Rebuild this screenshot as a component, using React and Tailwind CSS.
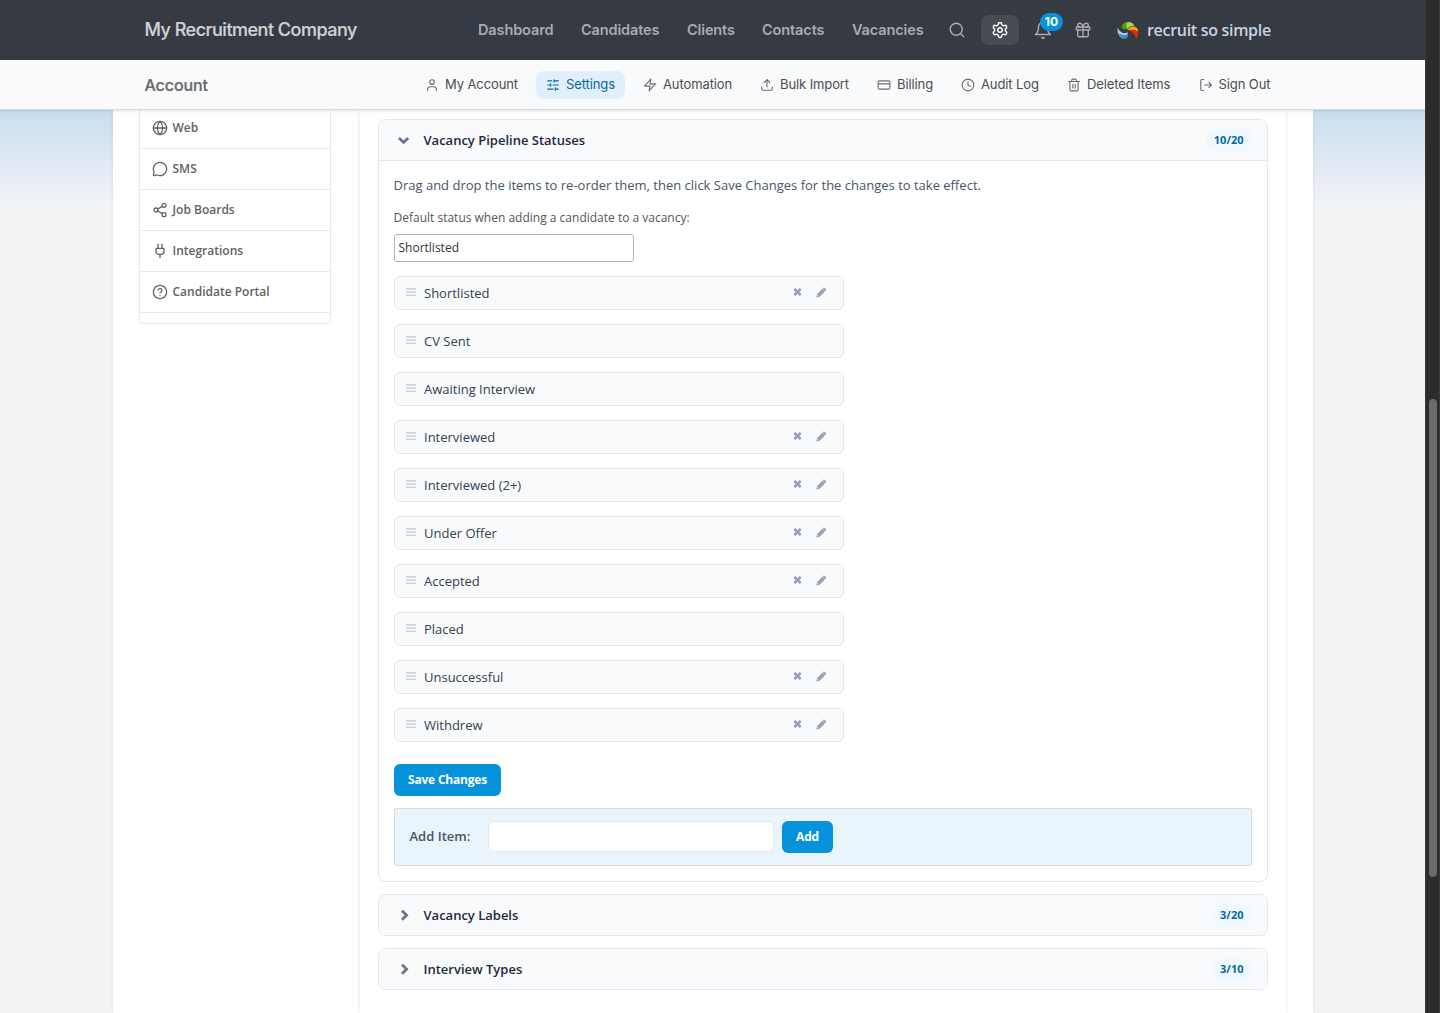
import React from "react";
import {
  Search, Settings, Gift, SlidersHorizontal, Upload, CreditCard, Clock,
  Globe, MessageCircle, Share2, Plug, CircleHelp,
} from "lucide-react";

function makeIcon(children) {
  return function Icon({ size = 24, strokeWidth = 2, className = "" }) {
    return (
      <svg
        width={size}
        height={size}
        viewBox="0 0 24 24"
        fill="none"
        stroke="currentColor"
        strokeWidth={strokeWidth}
        strokeLinecap="round"
        strokeLinejoin="round"
        className={className}
      >
        {children}
      </svg>
    );
  };
}

const Person = makeIcon(
  <>
    <circle cx="12" cy="7" r="4" />
    <path d="M4.500 21.500v-1.500a5 5 0 0 1 5-5h5a5 5 0 0 1 5 5v1.500" />
  </>
);
const Bolt = makeIcon(<path d="M13.500 2 2.500 14H12l-1.500 8L21.500 10H12Z" />);
const Bin = makeIcon(
  <path d="M2.500 6h19M19 6v14a2 2 0 0 1-2 2H7a2 2 0 0 1-2-2V6M8 6V4a2 2 0 0 1 2-2h4a2 2 0 0 1 2 2v2M10 11v6M14 11v6" />
);
const Exit = makeIcon(
  <path d="M8 2.500H5a2 2 0 0 0-2 2v15a2 2 0 0 0 2 2h3M17 7.500l4.500 4.500-4.500 4.500M21 12H10" />
);
const BellIcon = makeIcon(
  <>
    <path d="M18 8A6 6 0 0 0 6 8c0 7-4 10-4 10h20s-4-3-4-10" />
    <path d="M13.700 22a2 2 0 0 1-3.400 0" />
  </>
);

const mainNav = [
  ["Dashboard", "w-[75px]"],
  ["Candidates", "w-[78px]"],
  ["Clients", "w-[47px]"],
  ["Contacts", "w-[62px]"],
  ["Vacancies", "w-[71px]"],
];

const subNav = [
  ["My Account", Person, "w-[73px]"],
  ["Settings", SlidersHorizontal, "w-[49px]"],
  ["Automation", Bolt, "w-[69px]"],
  ["Bulk Import", Upload, "w-[69px]"],
  ["Billing", CreditCard, "w-[36px]"],
  ["Audit Log", Clock, "w-[58px]"],
  ["Deleted Items", Bin, "w-[83.500px]"],
  ["Sign Out", Exit, "w-[52px]"],
];

const sideNav = [
  ["Web", Globe],
  ["SMS", MessageCircle],
  ["Job Boards", Share2],
  ["Integrations", Plug],
  ["Candidate Portal", CircleHelp],
];

const statuses = [
  ["Shortlisted", true],
  ["CV Sent", false],
  ["Awaiting Interview", false],
  ["Interviewed", true],
  ["Interviewed (2+)", true],
  ["Under Offer", true],
  ["Accepted", true],
  ["Placed", false],
  ["Unsuccessful", true],
  ["Withdrew", true],
];

function Logo() {
  return (
    <svg width="22" height="19" viewBox="0 0 22 19" className="shrink-0">
      <path d="M.8 6.500C-.2 11 2 16.500 6.500 17.500c2.500.3 4-1 4.300-3 .2-1.500 0-2.300-.5-3.200-1.300.9-3 1.200-4.600.6C3.500 11 1.500 9.200.8 6.500Z" fill="#a5d8ea" />
      <path d="M1.500 12c1.300 4.300 5 6.600 8 5 1.400-.8 2-2.600 1.400-4.200-1.200 1.200-3 1.700-4.900 1.200-1.700-.3-3.300-1-4.500-2Z" fill="#3f86c8" />
      <path d="M4.500 5.500C5.500 2.500 8 .6 11.300.8c-1.800 1.700-2.500 4.200-1.800 7.500C7.500 9 5 8 4.500 5.500Z" fill="#4e9a0b" />
      <path d="M10.800 1c3.200-.2 6 1.500 6.500 4-2.800-.5-5.200.6-7 3.200C8.500 5.500 9 2.800 10.800 1Z" fill="#a4d65e" />
      <path d="M10.500 8.800c2-3 5-4 7.500-3 2 .8 3.200 2.500 3.200 5-3-1.800-7-.3-10.700-2Z" fill="#f9a208" />
      <path d="M12 9.300c3.500-.8 7-.6 9.200 1.700 0 3-.7 5.500-2.200 7.300-.3-3.800-2.500-7-7-9Z" fill="#e32b0b" />
    </svg>
  );
}

function Header() {
  return (
    <header className="flex h-[60px] shrink-0 items-center bg-[#363a42] pl-[144.500px] font-['Inter',sans-serif] whitespace-nowrap">
      <div className="mb-[2px] w-[333.500px] text-[18px] font-medium tracking-[-0.5px] text-[#d0d1d3] [-webkit-text-stroke:0.2px_currentColor]">My Recruitment Company</div>
      <nav className="flex gap-7 text-[14.5px] font-semibold text-[#a9abb0]">
        {mainNav.map(([label, w]) => (
          <a key={label} className={w + " tracking-[-0.12px]"}>{label}</a>
        ))}
      </nav>
      <div className="ml-[25px] flex items-center text-[#abadb1]">
        <Search size={18} strokeWidth={1.8} />
        <div className="ml-[15px] flex h-[30px] w-[38px] items-center justify-center rounded-lg bg-[#484b52] text-white">
          <Settings size={18} strokeWidth={1.9} />
        </div>
        <div className="relative ml-[15px] flex h-[30px] w-[18px] items-center justify-center">
          <BellIcon size={18} strokeWidth={1.9} className="shrink-0" />
          <span className="absolute top-[-2px] left-[6px] flex h-[18px] w-[23px] items-center justify-center rounded-full bg-[#0693dc] text-[12px] font-bold text-white">10</span>
        </div>
        <Gift size={18} strokeWidth={1.8} className="ml-[22px]" />
      </div>
      <div className="ml-[25px] flex items-center">
        <Logo />
        <span className="ml-[8px] font-['Open_Sans',sans-serif] text-[16px] font-semibold tracking-[-0.3px] text-[#c9d3e3]">recruit so simple</span>
      </div>
    </header>
  );
}

function SubHeader() {
  return (
    <div className="relative z-10 flex h-[50px] shrink-0 items-center border-b border-[#d6dbe0] bg-[#f9fafc] pl-[144.500px] font-['Inter',sans-serif] whitespace-nowrap shadow-[0_1px_3px_rgba(0,0,0,0.12)]">
      <div className="w-[270.500px] text-[16px] font-medium tracking-[-0.1px] text-[#66686b] [-webkit-text-stroke:0.2px_currentColor]">Account</div>
      <nav className="flex gap-2 text-[13px] tracking-[-0.1px] text-[#4b4d50]">
        {subNav.map(([label, Icon, w]) => (
          <a
            key={label}
            className={
              label === "Settings"
                ? "flex h-7 items-center gap-[6px] rounded-lg bg-[#e0effb] px-[10px] text-[#0369a1]"
                : "flex h-7 items-center gap-[6px] px-[10px]"
            }
          >
            <Icon size={14} strokeWidth={1.9} className={label === "Settings" ? "shrink-0" : "shrink-0 text-[#6b6d70]"} />
            <span className={w}>{label}</span>
          </a>
        ))}
      </nav>
    </div>
  );
}

function Sidebar() {
  return (
    <aside className="ml-[26px] h-[214px] w-[192px] shrink-0 rounded-b border border-t-0 border-[#e9e9ea]">
      {sideNav.map(([label, Icon], i) => (
        <a
          key={label}
          className={
            (i === 0 ? "h-[39px] pb-[3px] " : "h-[41px] ") +
            "flex items-center gap-[4.500px] border-b border-[#e9e9ea] pl-3 text-[12px] font-semibold text-[#626262]"
          }
        >
          <Icon size={16} strokeWidth={1.9} />
          {label}
        </a>
      ))}
    </aside>
  );
}

function Badge({ children }) {
  return (
    <span className="flex h-6 items-center rounded-full bg-[#f0f8ff] px-2 text-[11px] font-bold text-[#0369a1]">{children}</span>
  );
}

function SectionHead({ title, count, open }) {
  return (
    <div className={(open ? "border-b border-[#e2e8f0] " : "") + "flex h-[41px] items-center bg-[#f9fafc] pr-[15.500px] pl-[19px]"}>
      <span className="flex w-[25.500px] text-[#64748b]">
        <svg width="12" height="12" viewBox="0 0 12 12" fill="none" stroke="currentColor" strokeWidth="2.700">
          <path d={open ? "M1 4 5.600 8.400 10.200 4" : "M4 .6 8.600 5.200 4 9.800"} />
        </svg>
      </span>
      <span className={(open ? "pt-px " : "") + "flex-1 text-[13px] font-semibold text-[#1e293b]"}>{title}</span>
      <Badge>{count}</Badge>
    </div>
  );
}

function StatusRow({ label, editable }) {
  return (
    <li className="flex h-[34px] w-[450px] items-center rounded-md border border-[#e2e8f0] bg-[#f8fafc] pr-4 pl-[11px]">
      <svg width="10" height="9" viewBox="0 0 10 9" fill="#cbd5e1" className="mb-[2px]">
        <path d="M0 0h10v1.700H0zM0 3.200h10v1.700H0zM0 6.400h10v1.700H0z" />
      </svg>
      <span className="ml-2 flex-1 pt-[2px] text-[13px] text-[#334155]">{label}</span>
      {editable && (
        <span className="mb-[2px] flex items-center gap-[14px]">
          <svg width="9" height="8" viewBox="0 0 9 8" stroke="#94a3b8" strokeWidth="2.700">
            <path d="M1.300 .9 7.700 7.100M7.700 .9 1.300 7.100" />
          </svg>
          <svg width="11" height="11" viewBox="0 0 11 11" fill="#94a3b8">
            <path d="M7.200 .9c.5-.5 1-.5 1.500 0l1.200 1.200c.5.500.5 1 0 1.500l-.6.600-2.700-2.700ZM6.300 1.800l2.700 2.700-5.400 5.400L.3 10.500l.6-3.300Z" />
            <path d="M1.600 7.900 2.900 9.200l-1.200.300-.5-.500Z" fill="#f8fafc" />
          </svg>
        </span>
      )}
    </li>
  );
}

function PipelineCard() {
  return (
    <section className="h-[763px] overflow-hidden rounded-lg border border-[#e2e8f0]">
      <SectionHead title="Vacancy Pipeline Statuses" count="10/20" open />
      <div className="px-[15px] pt-[14px]">
        <p className="-ml-[0.5px] text-[13px] leading-5 text-[#475569]">
          Drag and drop the items to re-order them, then click Save Changes for the changes to take effect.
        </p>
        <p className="mt-[13px] -ml-[0.5px] text-[12px] leading-5 text-[#555555]">Default status when adding a candidate to a vacancy:</p>
        <div className="mt-[6px] flex h-7 w-[240px] items-center rounded-[3px] border border-[#b3b3b3] px-[3.500px] text-[12px] text-[#333333]">
          Shortlisted
        </div>
        <ul className="mt-[14px] flex flex-col gap-[14px]">
          {statuses.map(([label, editable]) => (
            <StatusRow key={label} label={label} editable={editable} />
          ))}
        </ul>
        <button className="mt-[22px] flex h-8 w-[107px] items-center justify-center rounded-md bg-[#0693dc] text-[12px] font-bold tracking-[-0.2px] text-white">
          Save Changes
        </button>
        <div className="mt-3 flex h-[58px] items-start rounded-[2px] border border-[#d5dce2] bg-[#e9f4fd] pt-3 pl-[14.500px]">
          <label className="w-[78.500px] text-[13px] leading-[31px] font-semibold text-[#475569]">Add Item:</label>
          <input className="h-[31px] w-[286px] rounded-md border border-[#e2e8f0] bg-white" />
          <button className="ml-2 h-8 w-[51px] rounded-md bg-[#0693dc] text-[12px] font-bold tracking-[-0.2px] text-white">Add</button>
        </div>
      </div>
    </section>
  );
}

export default function App() {
  return (
    <div className="flex h-[1013px] w-[1440px] overflow-hidden font-['Open_Sans',sans-serif]">
      <div className="flex w-[1425px] shrink-0 flex-col">
        <Header />
        <SubHeader />
        <div className="flex min-h-0 flex-1 justify-start bg-[#f1f3f5] bg-[linear-gradient(to_bottom,#c7deed_0px,#dbe8f2_45px,#e7edf4_68px,#f1f3f5_92px)] pl-[113px]">
          <main className="flex w-[1200px] items-start bg-white shadow-[0_0_4px_rgba(0,0,0,0.08)]">
            <Sidebar />
            <div className="ml-[29px] h-full w-[926px] shrink-0 px-[18px] pt-[9px] shadow-[0_0_4px_rgba(0,0,0,0.12)]">
              <div className="flex flex-col gap-3">
                <PipelineCard />
                <section className="h-[42px] overflow-hidden rounded-lg border border-[#e2e8f0] bg-[#f9fafc]">
                  <SectionHead title="Vacancy Labels" count="3/20" />
                </section>
                <section className="h-[42px] overflow-hidden rounded-lg border border-[#e2e8f0] bg-[#f9fafc]">
                  <SectionHead title="Interview Types" count="3/10" />
                </section>
              </div>
            </div>
          </main>
        </div>
      </div>
      <div className="w-[15px] shrink-0 border-x border-[#3a3a3a] bg-[#2c2c2c] pt-[399px] pl-[3px]">
        <div className="h-[478px] w-2 rounded-full bg-[#6b6b6b]" />
      </div>
    </div>
  );
}
